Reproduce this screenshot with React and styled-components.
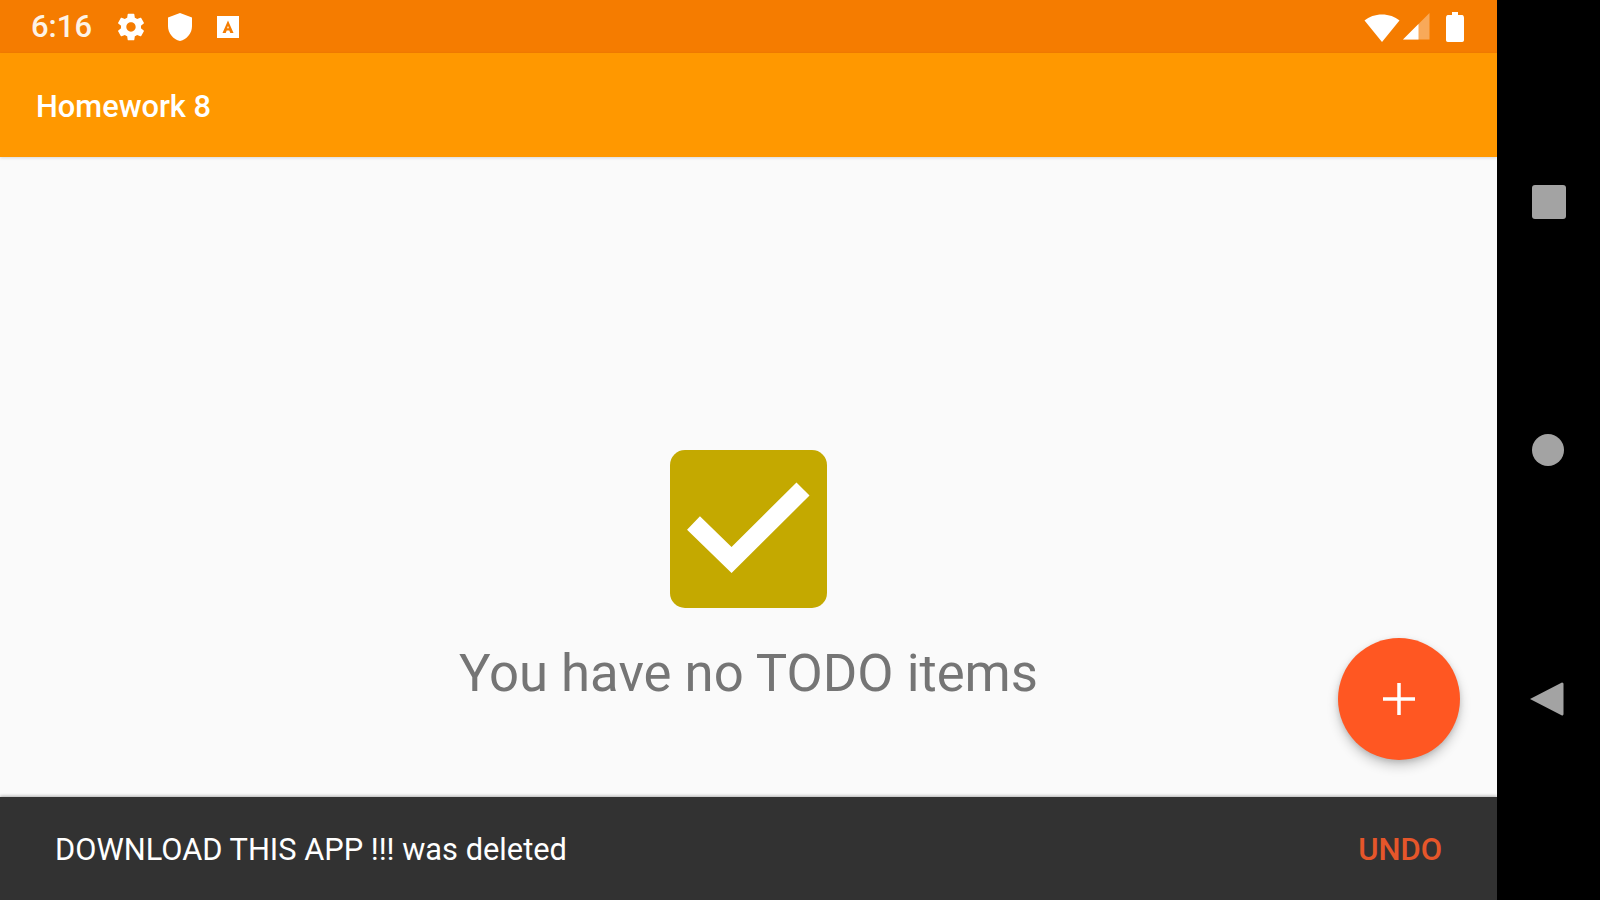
import React from 'react';
import styled, { createGlobalStyle } from 'styled-components';

const GlobalStyle = createGlobalStyle`
  html, body {
    margin: 0;
    padding: 0;
    height: 100%;
    background: #000;
    font-family: Roboto, "Noto Sans", sans-serif;
  }
  #root {
    height: 100%;
  }
`;

const Device = styled.div`
  display: flex;
  width: 1600px;
  height: 900px;
  overflow: hidden;
  background: #000;
`;

const Screen = styled.div`
  position: relative;
  display: flex;
  flex-direction: column;
  width: 1497px;
  height: 900px;
  background: #fafafa;
`;

const StatusBar = styled.div`
  display: flex;
  align-items: center;
  height: 53px;
  padding: 0 33px 0 31px;
  background: #f57c00;
  color: #fff;
`;

const Clock = styled.span`
  width: 84px;
  font-size: 31px;
  font-weight: 500;
  color: #fdf3e6;
`;

const StatusIcon = styled.svg`
  display: block;
  width: ${(p) => p.$width || p.$size}px;
  height: ${(p) => p.$size}px;
  margin-right: ${(p) => p.$gap || 0}px;
  fill: #fff;
`;

const Spacer = styled.div`
  flex: 1;
`;

const AppBar = styled.header`
  display: flex;
  align-items: center;
  height: 104px;
  padding: 2px 0 0 36px;
  box-sizing: border-box;
  background: #ff9800;
  box-shadow: 0 1px 3px rgba(0, 0, 0, 0.14);
  z-index: 1;
`;

const Title = styled.h1`
  margin: 0;
  font-size: 30.8px;
  font-weight: 500;
  color: #fff;
`;

const Content = styled.main`
  flex: 1;
  display: flex;
  flex-direction: column;
  align-items: center;
  padding-top: 293px;
`;

const CheckBox = styled.div`
  display: flex;
  align-items: center;
  justify-content: center;
  width: 157px;
  height: 158px;
  border-radius: 15px;
  background: #c4a900;
`;

const EmptyText = styled.p`
  margin: 32px 0 0;
  font-size: 52.7px;
  line-height: 66px;
  color: #757575;
`;

const Fab = styled.button`
  position: absolute;
  right: 37px;
  bottom: 140px;
  display: flex;
  align-items: center;
  justify-content: center;
  width: 122px;
  height: 122px;
  padding: 0;
  border: 0;
  border-radius: 50%;
  background: #ff5722;
  box-shadow: 0 6px 12px rgba(0, 0, 0, 0.2), 0 2px 5px rgba(0, 0, 0, 0.12);
`;

const Snackbar = styled.div`
  display: flex;
  align-items: center;
  justify-content: space-between;
  height: 103px;
  padding: 2px 55px 0;
  box-sizing: border-box;
  background: #323232;
  box-shadow: 0 -1px 3px rgba(0, 0, 0, 0.3);
`;

const SnackText = styled.span`
  font-size: 30.8px;
  color: #fff;
`;

const SnackAction = styled.span`
  font-size: 31px;
  font-weight: 500;
  color: #e6562a;
`;

const NavBar = styled.nav`
  display: flex;
  flex-direction: column;
  align-items: flex-start;
  width: 103px;
  height: 900px;
  padding: 185px 0 0 35px;
  box-sizing: border-box;
`;

const NavSquare = styled.div`
  width: 34px;
  height: 34px;
  border-radius: 3px;
  background: #a3a3a3;
`;

const NavCircle = styled.div`
  width: 32px;
  height: 32px;
  margin-top: 215px;
  border-radius: 50%;
  background: #a3a3a3;
`;

const NavBack = styled.svg`
  display: block;
  width: 35px;
  height: 36px;
  margin: 215px 0 0 -3px;
  fill: #a3a3a3;
`;

export default function App() {
  return (
    <>
      <GlobalStyle />
      <Device>
        <Screen>
          <StatusBar>
            <Clock>6:16</Clock>
            <StatusIcon $size={32} $gap={17} viewBox="0 0 24 24">
              <path d="M19.43 12.98c.04-.32.07-.64.07-.98s-.03-.66-.07-.98l2.11-1.65c.19-.15.24-.42.12-.64l-2-3.46c-.12-.22-.39-.3-.61-.22l-2.49 1c-.52-.4-1.08-.73-1.69-.98l-.38-2.65C14.46 2.18 14.25 2 14 2h-4c-.25 0-.46.18-.49.42l-.38 2.65c-.61.25-1.17.59-1.69.98l-2.49-1c-.23-.09-.49 0-.61.22l-2 3.46c-.13.22-.07.49.12.64l2.11 1.65c-.04.32-.07.65-.07.98s.03.66.07.98l-2.11 1.65c-.19.15-.24.42-.12.64l2 3.46c.12.22.39.3.61.22l2.49-1c.52.4 1.08.73 1.69.98l.38 2.65c.03.24.24.42.49.42h4c.25 0 .46-.18.49-.42l.38-2.65c.61-.25 1.17-.59 1.69-.98l2.49 1c.23.09.49 0 .61-.22l2-3.46c.12-.22.07-.49-.12-.64l-2.11-1.65zM12 15.5c-1.93 0-3.5-1.57-3.5-3.5s1.57-3.5 3.5-3.5 3.5 1.57 3.5 3.5-1.57 3.5-3.5 3.5z" />
            </StatusIcon>
            <StatusIcon $size={32} $gap={20} viewBox="0 0 24 24">
              <path d="M12 1.5 3 4.8v6.5c0 5.4 3.8 10 9 11.2 5.2-1.2 9-5.8 9-11.2V4.8L12 1.5z" />
            </StatusIcon>
            <StatusIcon $size={24} viewBox="0 0 24 24">
              <path fillRule="evenodd" d="M1 1h22v22H1V1zm11 4.5L6.5 18h3.2l1-2.6h2.6l1 2.6h3.2L12 5.5zm0 5.2.9 2.5h-1.8l.9-2.5z" />
            </StatusIcon>
            <Spacer />
            <StatusIcon $size={36} $gap={2} viewBox="0 0 36 36">
              <path d="M18 30 .5 8.5C5 4.7 11.2 2.5 18 2.5s13 2.2 17.5 6L18 30z" transform="translate(0 3)" />
            </StatusIcon>
            <StatusIcon $size={29} $gap={15} viewBox="0 0 29 29">
              <path d="M1 27.5 27.5 1v26.5H1z" fillOpacity="0.35" />
              <path d="M1 27.5 16.5 12v15.5H1z" />
            </StatusIcon>
            <StatusIcon $size={30} $width={18} viewBox="0 0 30 30" preserveAspectRatio="none">
              <path d="M10 0h10v3h7c1.5 0 3 1.2 3 3v22c0 1.2-1.2 2-3 2H3c-1.8 0-3-.8-3-2V6c0-1.8 1.5-3 3-3h7V0z" />
            </StatusIcon>
          </StatusBar>
          <AppBar>
            <Title>Homework 8</Title>
          </AppBar>
          <Content>
            <CheckBox>
              <svg width="122" height="92" viewBox="0 0 122 92" overflow="visible">
                <path d="M5.5 40 L 43.5 77 L 115 6" fill="none" stroke="#fff" strokeWidth="18.5" />
              </svg>
            </CheckBox>
            <EmptyText>You have no TODO items</EmptyText>
          </Content>
          <Snackbar>
            <SnackText>DOWNLOAD THIS APP !!! was deleted</SnackText>
            <SnackAction>UNDO</SnackAction>
          </Snackbar>
          <Fab>
            <svg width="34" height="34" viewBox="0 0 34 34">
              <path d="M17 1v32M1 17h32" stroke="#fff" strokeWidth="3.5" fill="none" />
            </svg>
          </Fab>
        </Screen>
        <NavBar>
          <NavSquare />
          <NavCircle />
          <NavBack viewBox="0 0 35 36">
            <path d="M33 1.5c1 0 1.5.8 1.5 1.5v30c0 .8-.5 1.5-1.5 1.5L1 18 33 1.5z" />
          </NavBack>
        </NavBar>
      </Device>
    </>
  );
}
